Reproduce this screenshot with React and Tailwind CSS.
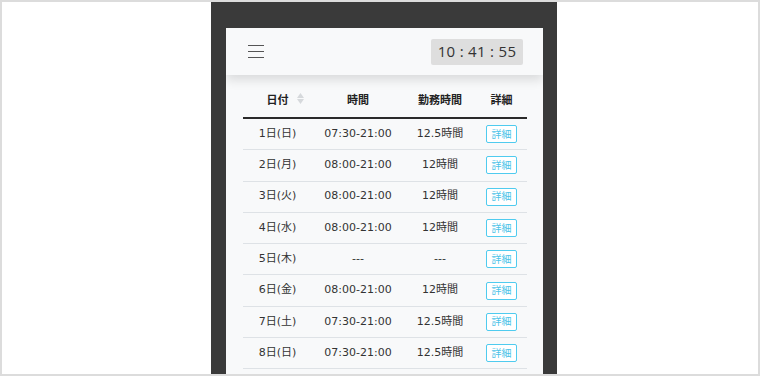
import React from "react";

const rows = [
  ["1日(日)", "07:30-21:00", "12.5時間"],
  ["2日(月)", "08:00-21:00", "12時間"],
  ["3日(火)", "08:00-21:00", "12時間"],
  ["4日(水)", "08:00-21:00", "12時間"],
  ["5日(木)", "---", "---"],
  ["6日(金)", "08:00-21:00", "12時間"],
  ["7日(土)", "07:30-21:00", "12.5時間"],
  ["8日(日)", "07:30-21:00", "12.5時間"],
];

const font = { fontFamily: '"DejaVu Sans", "Noto Sans CJK JP", sans-serif' };

export default function App() {
  return (
    <div className="w-[760px] h-[376px] border-2 border-[#dcdcdc] bg-white overflow-hidden">
      <div className="ml-[209px] w-[346px] h-full bg-[#3a3a3a] pt-[26px] pl-[15px] pr-[14px] overflow-hidden">
        <div className="h-full bg-[#f8f9fa] overflow-hidden">
          <div className="relative z-10 h-[47px] bg-[#f8f9fa] flex items-center justify-between pl-[22px] pr-[20px] shadow-[0_5px_10px_rgba(0,0,0,0.12)]">
            <div className="flex flex-col gap-[4.5px] w-[16px]">
              <div className="h-[1.5px] bg-[#555]" />
              <div className="h-[1.5px] bg-[#555]" />
              <div className="h-[1.5px] bg-[#555]" />
            </div>
            <div
              className="w-[92px] h-[26px] bg-[#dedede] rounded-[2px] flex items-center justify-center text-[15px] text-[#333] tracking-[0.3px]"
              style={{ fontFamily: '"Open Sans", sans-serif' }}
            >
              10 : 41 : 55
            </div>
          </div>
          <div className="pt-[7px] pl-[17px] pr-[16px]" style={font}>
            <div className="grid grid-cols-[69px_92px_72px_51px] h-[37px] border-b-2 border-[#2a2a2a] items-center text-[11px] font-bold text-[#222] pt-[3px]">
              <div className="relative flex justify-center">
                <span>日付</span>
                <span className="absolute right-[8px] top-[0px] flex flex-col items-center gap-[1px]">
                  <svg width="7" height="5" viewBox="0 0 7 5"><path d="M3.5 0L7 5H0Z" fill="#d6d9dc" /></svg>
                  <svg width="7" height="5" viewBox="0 0 7 5"><path d="M0 0H7L3.5 5Z" fill="#d6d9dc" /></svg>
                </span>
              </div>
              <div className="text-center">時間</div>
              <div className="text-center">勤務時間</div>
              <div className="text-center">詳細</div>
            </div>
            {rows.map((r, i) => (
              <div
                key={i}
                className="grid grid-cols-[69px_92px_72px_51px] h-[31.3px] border-b border-[#dee2e6] items-center text-[11px] text-[#333]"
              >
                <div className="text-center">{r[0]}</div>
                <div className="text-center">{r[1]}</div>
                <div className="text-center">{r[2]}</div>
                <div className="flex justify-center">
                  <div className="w-[31px] h-[18px] border border-[#4fcbef] rounded-[2px] flex items-center justify-center text-[10px] text-[#4cc3e8] bg-white">
                    詳細
                  </div>
                </div>
              </div>
            ))}
          </div>
        </div>
      </div>
    </div>
  );
}
